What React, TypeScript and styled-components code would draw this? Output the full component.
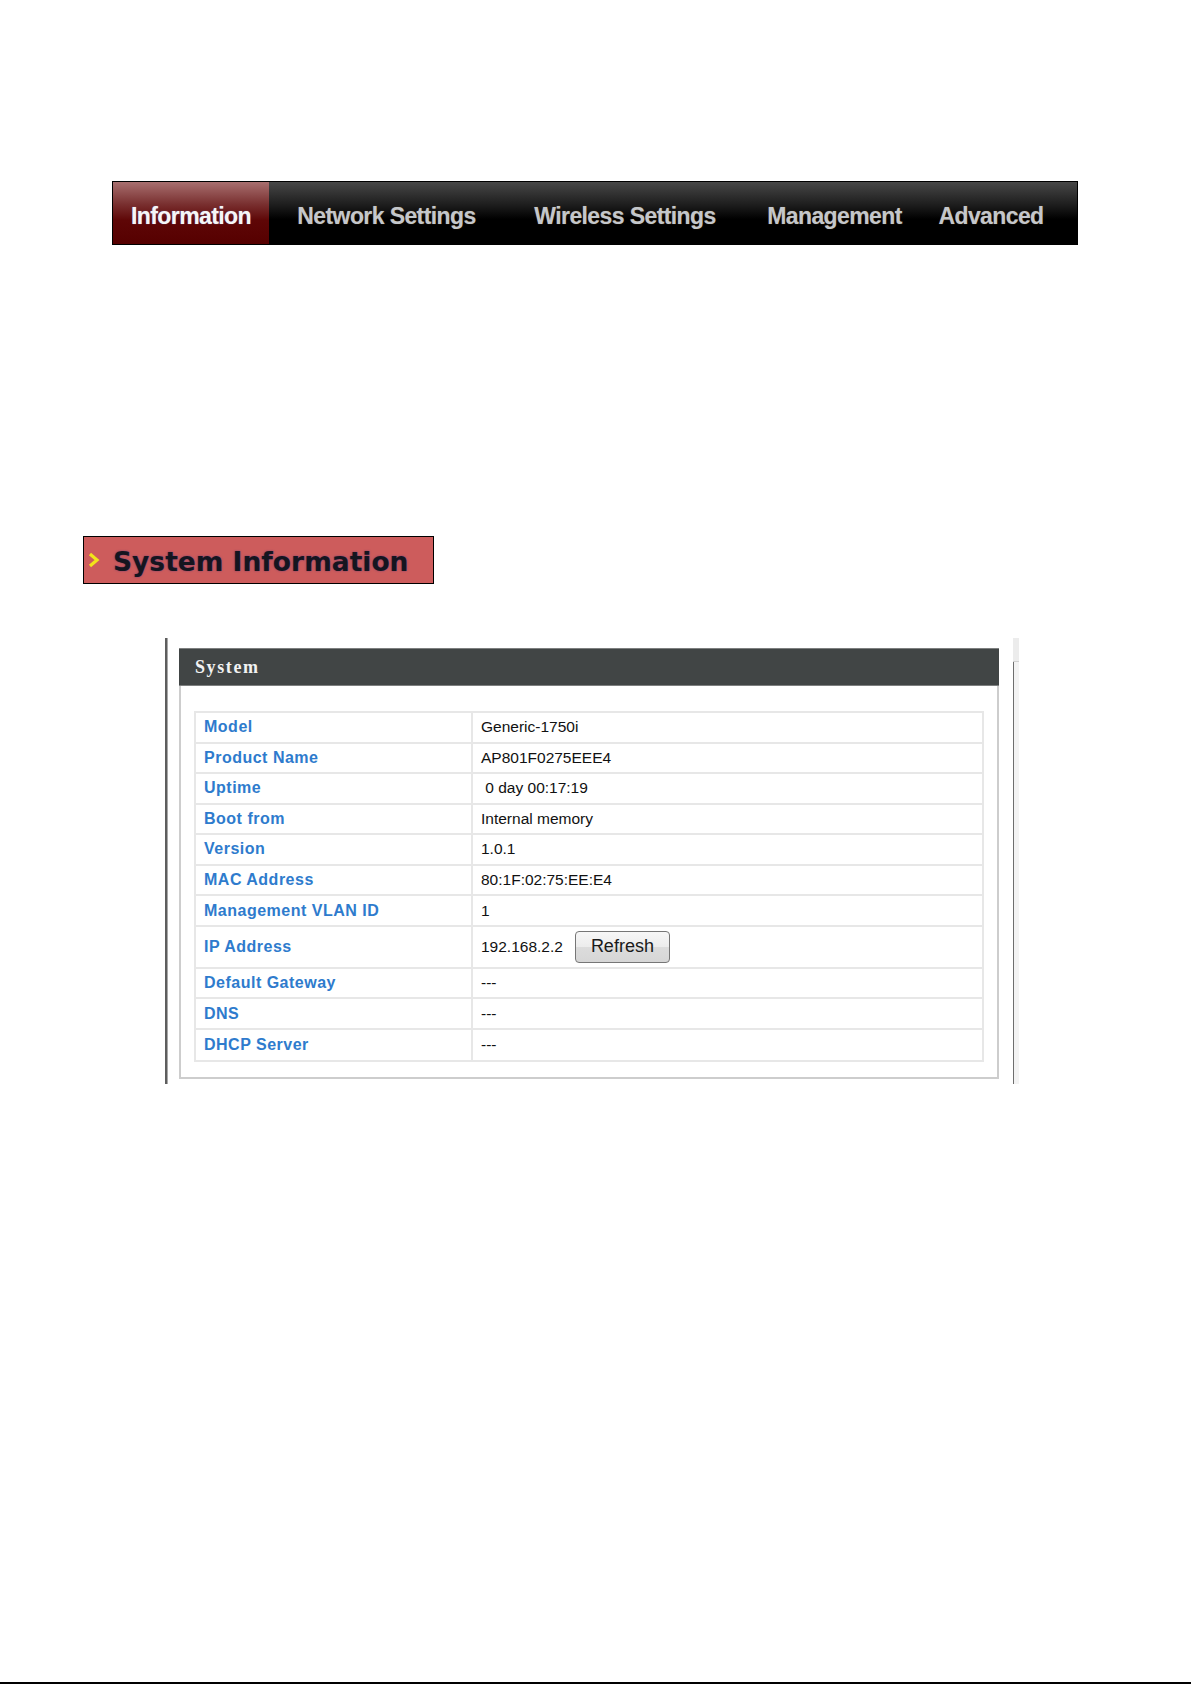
import React from "react";
import styled, { createGlobalStyle } from "styled-components";

/** page globals */
const GlobalStyle = createGlobalStyle`
  html, body {
    margin: 0;
    padding: 0;
    background: #ffffff;
  }
  * {
    box-sizing: border-box;
  }
`;

const tabs = [
  { label: "Information", width: 156, active: true },
  { label: "Network Settings", width: 235 },
  { label: "Wireless Settings", width: 242 },
  { label: "Management", width: 177 },
  { label: "Advanced", width: 136 },
];

const rows: { label: string; value: string; refresh?: boolean }[] = [
  { label: "Model", value: "Generic-1750i" },
  { label: "Product Name", value: "AP801F0275EEE4" },
  { label: "Uptime", value: "\u00a00 day 00:17:19" },
  { label: "Boot from", value: "Internal memory" },
  { label: "Version", value: "1.0.1" },
  { label: "MAC Address", value: "80:1F:02:75:EE:E4" },
  { label: "Management VLAN ID", value: "1" },
  { label: "IP Address", value: "192.168.2.2", refresh: true },
  { label: "Default Gateway", value: "---" },
  { label: "DNS", value: "---" },
  { label: "DHCP Server", value: "---" },
];

const Chevron = () => (
  <svg width="12" height="16" viewBox="0 0 12 16">
    <polyline
      points="2,2 9,8 2,14"
      fill="none"
      stroke="#f2e41a"
      strokeWidth={3.2}
      strokeLinejoin="miter"
    />
  </svg>
);

const App = () => {
  return (
    <Page>
      <GlobalStyle />
      <NavBar>
        {tabs.map((t) => (
          <NavTab key={t.label} $width={t.width} $active={!!t.active}>
            {t.label}
          </NavTab>
        ))}
      </NavBar>

      <SectionTitle>
        <Chevron />
        <span>System Information</span>
      </SectionTitle>

      <PanelArea>
        <LeftRule />
        <Panel>
          <PanelHeader>System</PanelHeader>
          <InfoTable>
            {rows.map((r, i) => (
              <Row key={r.label} $tall={!!r.refresh} $last={i === rows.length - 1}>
                <LabelCell>{r.label}</LabelCell>
                <ValueCell>
                  {r.value}
                  {r.refresh && <RefreshButton type="button">Refresh</RefreshButton>}
                </ValueCell>
              </Row>
            ))}
          </InfoTable>
        </Panel>
        <ScrollStrip>
          <ScrollCap />
        </ScrollStrip>
      </PanelArea>

      <Spacer />
      <BottomEdge />
    </Page>
  );
};

const Page = styled.div`
  width: 1191px;
  min-height: 1685px;
  display: flex;
  flex-direction: column;
  padding-top: 181px;
  font-family: "Liberation Sans", Arial, sans-serif;
`;

const NavBar = styled.nav`
  margin-left: 112px;
  width: 966px;
  height: 64px;
  border: 1px solid #000;
  display: flex;
  background: linear-gradient(to bottom, #474747 0%, #1c1c1c 38%, #000 60%, #000 100%);
`;

const NavTab = styled.div<{ $width: number; $active: boolean }>`
  width: ${(p) => p.$width}px;
  flex: none;
  display: flex;
  align-items: center;
  justify-content: center;
  padding-top: 6px;
  font-family: "Liberation Sans", Arial, sans-serif;
  font-weight: bold;
  font-size: 23px;
  letter-spacing: -0.6px;
  color: ${(p) => (p.$active ? "#f6f6f6" : "#c3c7cc")};
  text-shadow: ${(p) =>
    p.$active ? "0 0 1px rgba(150,170,255,0.7)" : "0 0 1px rgba(200,140,60,0.55)"};
  background: ${(p) =>
    p.$active
      ? "linear-gradient(to bottom, #a86f6f 0%, #7a3131 35%, #5e0606 62%, #560000 100%)"
      : "transparent"};
`;

const SectionTitle = styled.div`
  margin-top: 291px;
  margin-left: 83px;
  width: 351px;
  height: 48px;
  border: 1px solid #000;
  background: #cd5c5c;
  display: flex;
  align-items: center;
  gap: 13px;
  padding-left: 4px;
  font-family: "DejaVu Sans", Verdana, sans-serif;
  font-weight: bold;
  font-size: 26.5px;
  color: #15151f;
  text-shadow: 0 0 2px rgba(40, 40, 140, 0.55);
  span {
    padding-top: 2px;
  }
`;

const PanelArea = styled.div`
  margin-top: 54px;
  margin-left: 165px;
  height: 446px;
  display: flex;
  align-items: flex-start;
`;

const LeftRule = styled.div`
  width: 3px;
  height: 100%;
  background: #5e5e5e;
  border-right: 1px solid #a8a8a8;
`;

const Panel = styled.section`
  margin-left: 11px;
  margin-top: 10px;
  width: 820px;
  border: 2px solid #cdcdcd;
  border-top: 0;
  padding: 0 13px 15px 13px;
  background: #fff;
`;

const PanelHeader = styled.div`
  margin: 0 -15px 25px -15px;
  height: 38px;
  background: #414545;
  border-top: 1px solid #7d7f7f;
  border-bottom: 1px solid #7d7f7f;
  display: flex;
  align-items: center;
  padding-left: 16px;
  font-family: "Liberation Serif", "Times New Roman", serif;
  font-weight: bold;
  font-size: 18px;
  letter-spacing: 1.6px;
  color: #f2f2f2;
`;

const InfoTable = styled.div`
  border: 2px solid #e7e7e7;
  display: flex;
  flex-direction: column;
`;

const Row = styled.div<{ $tall: boolean; $last: boolean }>`
  display: grid;
  grid-template-columns: 277px 1fr;
  height: ${(p) => (p.$tall ? 42 : 30.55)}px;
  border-bottom: ${(p) => (p.$last ? "0" : "2px solid #e7e7e7")};
`;

const LabelCell = styled.div`
  display: flex;
  align-items: center;
  padding-left: 8px;
  border-right: 2px solid #e7e7e7;
  font-family: "Liberation Sans", Arial, sans-serif;
  font-weight: bold;
  font-size: 16px;
  letter-spacing: 0.5px;
  color: #2e7bcd;
`;

const ValueCell = styled.div`
  display: flex;
  align-items: center;
  padding-left: 8px;
  font-family: "Liberation Sans", Arial, sans-serif;
  font-size: 15.5px;
  color: #111;
`;

const RefreshButton = styled.button`
  margin-left: 12px;
  width: 95px;
  height: 32px;
  border: 1px solid #767676;
  border-radius: 4px;
  background: linear-gradient(to bottom, #f7f7f7 0%, #ececec 50%, #dcdcdc 51%, #d6d6d6 100%);
  font-family: "Liberation Sans", Arial, sans-serif;
  font-size: 18px;
  color: #1a1a1a;
  padding: 0 0 1px 0;
`;

const ScrollStrip = styled.div`
  margin-left: 14px;
  width: 6px;
  height: 100%;
  background: #f3f3f3;
  border-left: 1px solid #6e6e6e;
  display: flex;
  flex-direction: column;
`;

const ScrollCap = styled.div`
  height: 24px;
  margin-left: -1px;
  background: #ececec;
  border-bottom: 1px solid #d0d0d0;
`;

const Spacer = styled.div`
  flex: 1;
`;

const BottomEdge = styled.div`
  height: 2px;
  background: #000;
  margin-bottom: 1px;
`;

export default App;
